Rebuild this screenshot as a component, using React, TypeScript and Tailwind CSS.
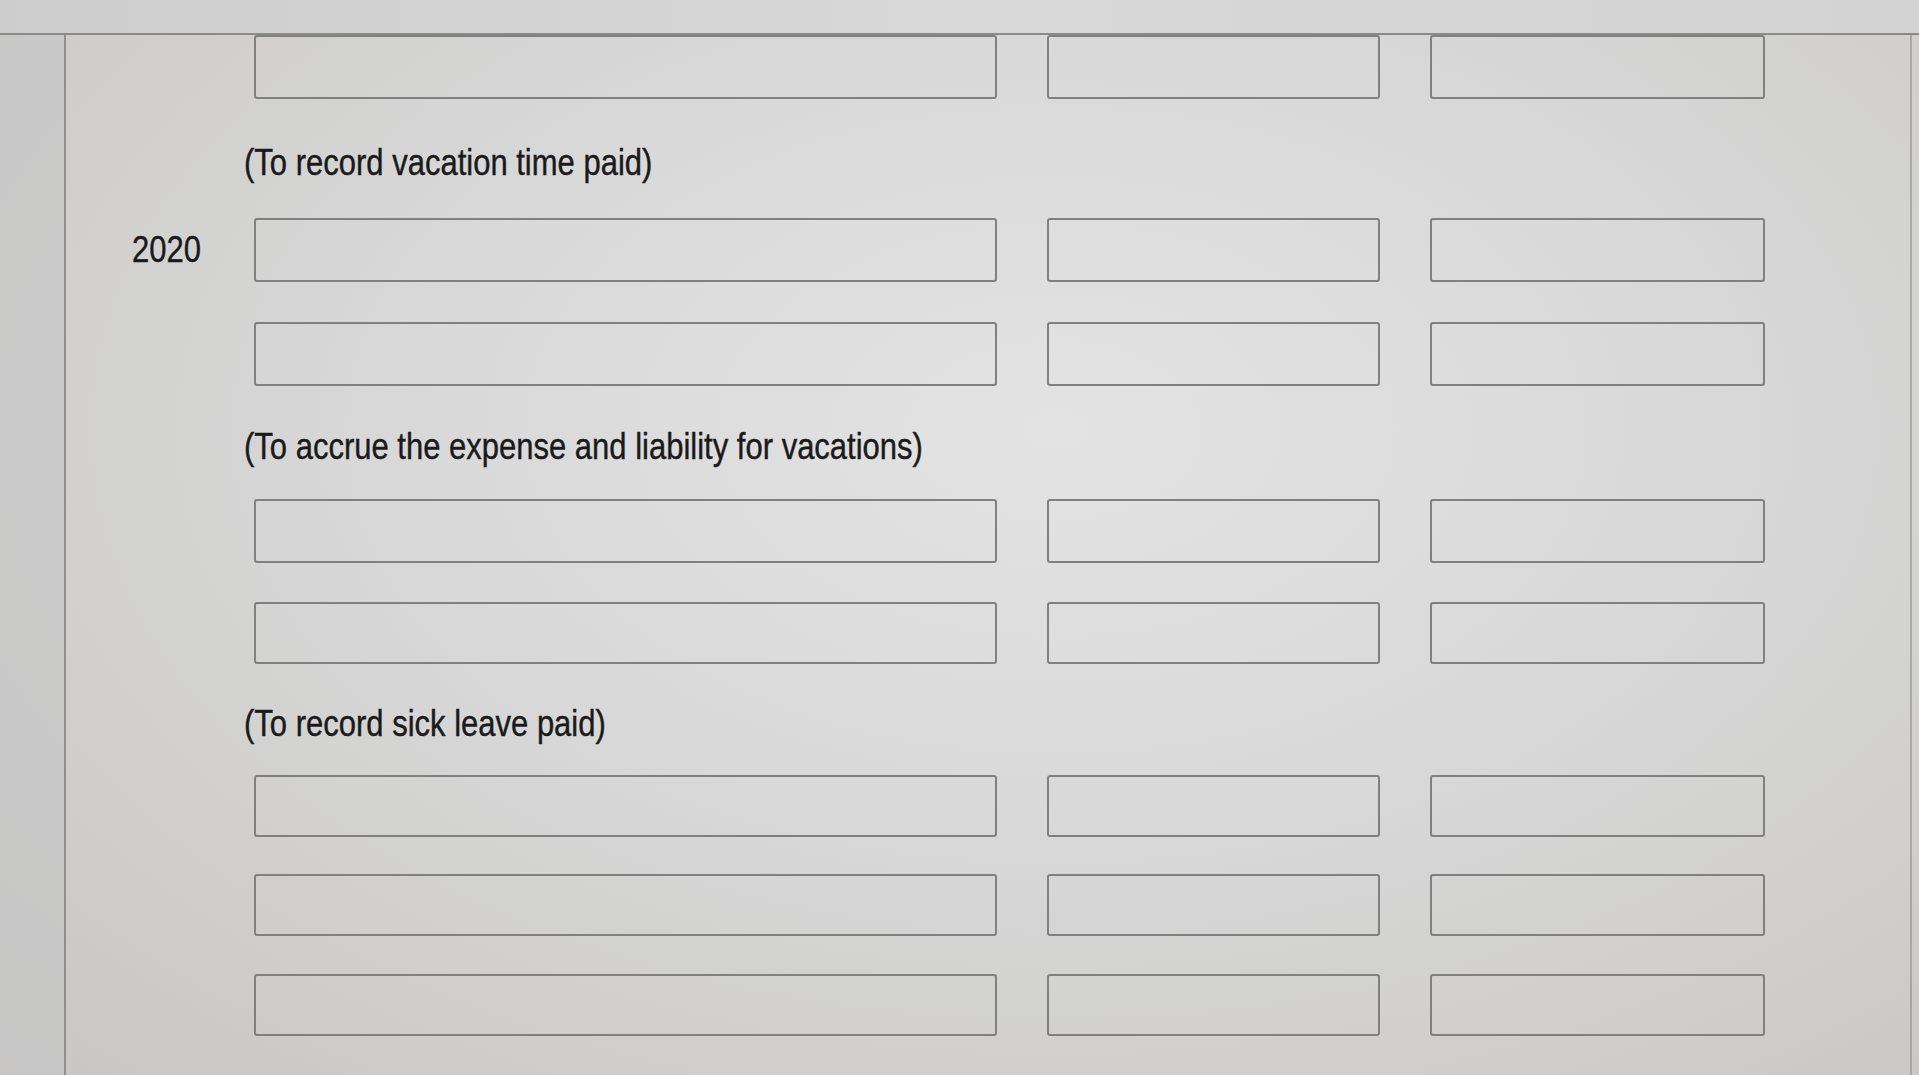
const font = { fontFamily: '"Liberation Sans", Arial, sans-serif' };

type Row = { year?: string; h: string; mt: string };

// text on the form is set slightly tall and heavy
const label = "inline-block origin-center scale-y-[1.17] text-[31px] text-[#1a1a1a] [-webkit-text-stroke:0.35px_#1a1a1a]";

// one journal entry line: date cell, account, debit, credit
function EntryRow({ year, h, mt }: Row) {
  return (
    <div className={`flex items-center gap-x-[50px] ${mt}`}>
      <div className="w-[144px] shrink-0 pr-[3px] text-right">
        {year && <span className={label}>{year}</span>}
      </div>
      <div className={`w-[743px] ${h} shrink-0 rounded-[3px] border-2 border-[#808080]`} />
      <div className={`w-[333px] ${h} shrink-0 rounded-[3px] border-2 border-[#808080]`} />
      <div className={`w-[335px] ${h} shrink-0 rounded-[3px] border-2 border-[#808080]`} />
    </div>
  );
}

function Note({ text, h }: { text: string; h: string }) {
  return (
    <div className={`flex ${h} items-center pl-[184px] pt-[9px]`}>
      <span className={label}>{text}</span>
    </div>
  );
}

export default function App() {
  return (
    <div
      style={font}
      className="flex h-[1075px] w-full flex-col overflow-hidden bg-[radial-gradient(ellipse_at_55%_40%,#e3e3e3_0%,#d8d8d8_45%,#c8c6c4_100%)]"
    >
      {/* window chrome strip */}
      <div className="h-[35px] shrink-0 border-b-2 border-[#8a8a8a] bg-[linear-gradient(90deg,#cdcdcd,#d8d8d8_50%,#d3d3d3)]" />

      <div className="flex flex-1">
        <aside className="w-[66px] shrink-0 border-r-2 border-[#8f8f8f] bg-[#c6c6c6]/70" />

        <main className="-ml-[6px] flex-1">
          <EntryRow h="h-[64px]" mt="mt-0" />
          <Note text="(To record vacation time paid)" h="h-[119px]" />
          <EntryRow year="2020" h="h-[64px]" mt="mt-0" />
          <EntryRow h="h-[64px]" mt="mt-[40px]" />
          <Note text="(To accrue the expense and liability for vacations)" h="h-[113px]" />
          <EntryRow h="h-[64px]" mt="mt-0" />
          <EntryRow h="h-[62px]" mt="mt-[39px]" />
          <Note text="(To record sick leave paid)" h="h-[111px]" />
          <EntryRow h="h-[62px]" mt="mt-0" />
          <EntryRow h="h-[62px]" mt="mt-[37px]" />
          <EntryRow h="h-[62px]" mt="mt-[38px]" />
        </main>

        <div className="w-[9px] shrink-0 border-l-2 border-[#8f8f8f]/60" />
      </div>
    </div>
  );
}
